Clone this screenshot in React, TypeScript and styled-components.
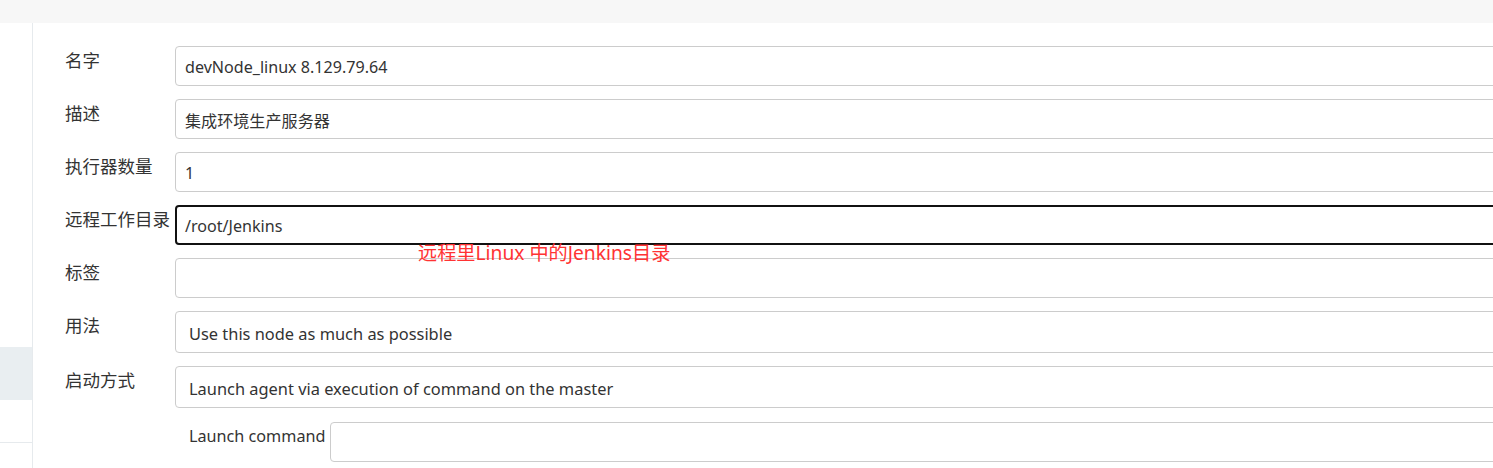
import styled, { createGlobalStyle } from 'styled-components'

const GlobalStyle = createGlobalStyle`
  html, body {
    margin: 0;
    padding: 0;
    background: #fff;
    overflow: hidden;
  }
  body {
    font-family: "Noto Sans", "Noto Sans CJK SC", sans-serif;
    color: #333;
  }
`

type Field = {
  label: string
  value: string
  focused?: boolean
  select?: boolean
}

const fields: Field[] = [
  { label: '名字', value: 'devNode_linux 8.129.79.64' },
  { label: '描述', value: '集成环境生产服务器' },
  { label: '执行器数量', value: '1' },
  { label: '远程工作目录', value: '/root/Jenkins', focused: true },
  { label: '标签', value: '' },
  { label: '用法', value: 'Use this node as much as possible', select: true },
  { label: '启动方式', value: 'Launch agent via execution of command on the master', select: true },
]

function App() {
  return (
    <>
      <GlobalStyle />
      <TopBar />
      <Page>
        <Sidebar>
          <SideSpacer />
          <SideActive />
          <SideItem />
        </Sidebar>
        <Main>
          {fields.map((f) => (
            <FormRow key={f.label}>
              <Label>{f.label}</Label>
              <Control>
                {f.select ? (
                  <SelectBox>{f.value}</SelectBox>
                ) : (
                  <TextBox $focused={f.focused}>{f.value}</TextBox>
                )}
                {f.focused && <Note>远程里Linux 中的Jenkins目录</Note>}
              </Control>
            </FormRow>
          ))}
          <SubRow>
            <SubLabel>Launch command</SubLabel>
            <SubInput />
          </SubRow>
        </Main>
      </Page>
    </>
  )
}

const TopBar = styled.div`
  height: 23px;
  background: #f7f7f7;
`

const Page = styled.div`
  display: flex;
  height: 445px;
`

const Sidebar = styled.div`
  width: 32px;
  flex-shrink: 0;
  border-right: 1px solid #e6eaed;
  display: flex;
  flex-direction: column;
`

const SideSpacer = styled.div`
  height: 324px;
`

const SideActive = styled.div`
  height: 53px;
  background: #e9eef1;
`

const SideItem = styled.div`
  height: 42px;
  border-bottom: 1px solid #e6eaed;
`

const Main = styled.div`
  padding: 23px 0 0 32px;
  flex: 1;
`

const FormRow = styled.div`
  display: flex;
  margin-bottom: 13px;
`

const Label = styled.div`
  width: 110px;
  flex-shrink: 0;
  font-size: 17.5px;
  line-height: 24px;
  padding-top: 2px;
  white-space: nowrap;
`

const Control = styled.div`
  position: relative;
`

const TextBox = styled.div<{ $focused?: boolean }>`
  box-sizing: border-box;
  width: 1360px;
  height: 40px;
  padding: 2px 10px 0;
  display: flex;
  align-items: center;
  font-size: 16.1px;
  color: #333;
  border: ${(p) => (p.$focused ? '2px solid #111' : '1px solid #ccc')};
  padding-left: ${(p) => (p.$focused ? '8px' : '9px')};
  border-radius: 4px;
  background: #fff;
`

const SelectBox = styled.div`
  box-sizing: border-box;
  width: 1360px;
  height: 42px;
  padding: 2px 13px 0;
  display: flex;
  align-items: center;
  font-size: 16.4px;
  color: #333;
  border: 1px solid #ccc;
  border-radius: 4px;
  background: #fff;
`

const Note = styled.div`
  position: absolute;
  z-index: 2;
  left: 243px;
  top: 35px;
  color: #f33;
  font-size: 19.2px;
  line-height: 26px;
  white-space: nowrap;
`

const SubRow = styled.div`
  display: flex;
  align-items: flex-start;
  padding-left: 124px;
  margin-top: 1px;
`

const SubLabel = styled.div`
  font-size: 16.2px;
  line-height: 22px;
  padding-top: 4px;
  margin-right: 5px;
  white-space: nowrap;
`

const SubInput = styled.div`
  box-sizing: border-box;
  width: 1200px;
  height: 40px;
  margin-top: 1px;
  border: 1px solid #ccc;
  border-radius: 4px;
`

export default App
